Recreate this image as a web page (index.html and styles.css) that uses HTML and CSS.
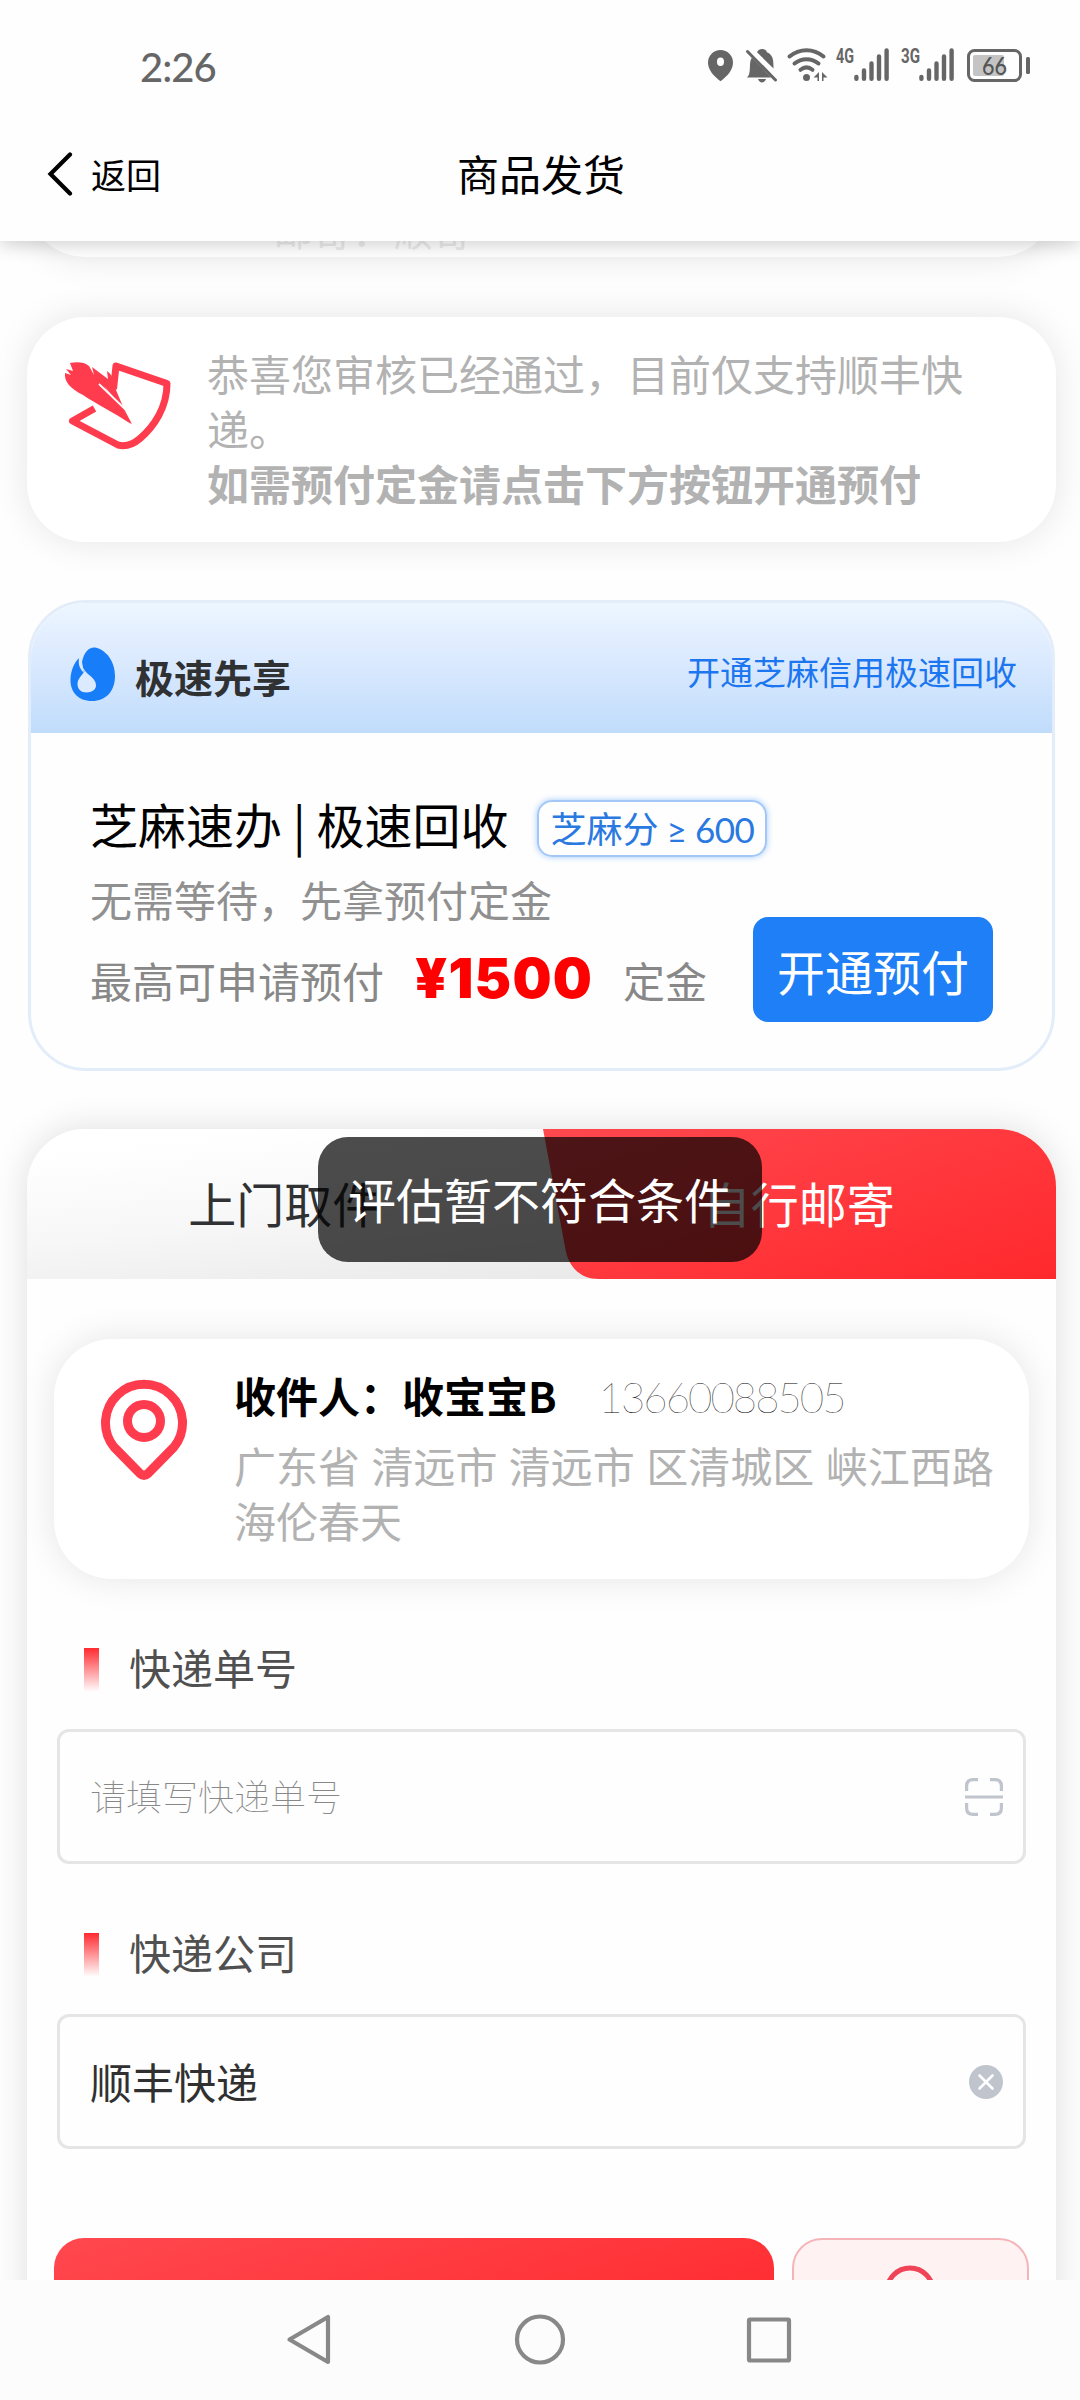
FILE: index.html
```html
<!DOCTYPE html>
<html lang="zh-CN">
<head>
<meta charset="utf-8">
<title>商品发货</title>
<link rel="stylesheet" href="styles.css">
</head>
<body>
<div class="screen">
  <header class="top">
    <div class="status">
      <span class="clock">2:26</span>
      <svg class="status-icons" width="326" height="40" viewBox="706 45 326 40" fill="#666">
        <path fill-rule="evenodd" d="M720.500 50a12.500 12.500 0 0 0-12.500 12.700c0 7 5.500 13.200 12.500 18.500 7-5.300 12.500-11.500 12.500-18.500A12.500 12.500 0 0 0 720.500 50Zm0 7.500a3.500 4.200 0 1 1 0 8.500 3.500 4.200 0 0 1 0-8.500Z"/>
        <path d="M747 77.500c2.500-2.500 2.800-5 3-13 .1-3 .8-5 2-6.700L771 77.500h-24Zm10-25.300c1-2 3-3.200 5-3.200 2.500 0 4.200 1.200 5 3.200 4 1.600 6.200 5.300 6.300 10.300l.2 6ZM758 79h8c-.8 2.300-2.200 3.400-4 3.400s-3.200-1.100-4-3.400Z"/>
        <path d="M747.500 51.500 775.500 80" fill="none" stroke="#666" stroke-width="3" stroke-linecap="round"/>
        <path d="M789.500 56.500c10-8.500 24-8.500 34 0M794.500 63.500c7-5.800 17-5.800 24 0M800.500 69.800c3.800-3 8.200-3 12 0" fill="none" stroke="#666" stroke-width="4" stroke-linecap="round"/>
        <circle cx="806.500" cy="77.500" r="3.500"/>
        <path d="M813.500 77.500 819 72v9h-1.500v-3.500ZM822 72l5.500 5.500H823.500V81H822Z"/>
        <g stroke="#666" stroke-width="4.400" stroke-linecap="round">
          <path d="M856.400 77v1.800M864 70.500v8.300M871.500 63.500v15.300M879 56.500v22.300M886.600 50.500v28.300"/>
          <path d="M921.400 77v1.800M929 70.500v8.300M936.500 63.500v15.300M944 56.500v22.300M951.600 50.500v28.300"/>
        </g>
        <text class="net" x="836" y="63" textLength="18" lengthAdjust="spacingAndGlyphs">4G</text>
        <text class="net" x="901" y="63" textLength="19" lengthAdjust="spacingAndGlyphs">3G</text>
        <rect x="968.500" y="50.500" width="52" height="30" rx="6" fill="none" stroke="#666" stroke-width="3"/>
        <rect x="973" y="55" width="31" height="21" rx="2" fill="#c4c4c4"/>
        <rect x="1026" y="57" width="4" height="17" rx="1.500"/>
        <text class="pct" x="982" y="74.500" textLength="25" lengthAdjust="spacingAndGlyphs">66</text>
      </svg>
    </div>
    <nav class="navbar">
      <a class="back">
        <svg width="26" height="44" viewBox="0 0 26 44"><path d="M23 2.500 3.500 22 23 41.500" fill="none" stroke="#000" stroke-width="4.200" stroke-linecap="round"/></svg>
        <span>返回</span>
      </a>
      <h1 class="title">商品发货</h1>
    </nav>
  </header>

  <main class="content">
    <section class="card previous"><span>邮寄：</span><span>顺寄</span></section>

    <section class="card notice">
      <svg class="notice-icon" width="110" height="90" viewBox="62 362 110 90">
        <path d="M113.500 391 116 368l51 17.500c0 24-13 43-27 55-7 6-14 8.500-22 6.500L72.500 423l22-12.500" fill="none" stroke="#ff3b4e" stroke-width="7" stroke-linejoin="round"/>
        <path d="M70 365c6-1 14-1.500 19 3l5 9-2-8 16 12-1-8c8 6 7 13 9 19l8 19-20-23 27 38c-18-12-33-19-48-29-12-6-19-13-18-22l6 2-5-6 7 2Z" fill="#ff3b4e"/>
        <path d="M90 380c12 7 24 17 34 31l8 15c-16-11-32-20-46-29Z" fill="#ff3b4e"/>
        <path d="M99 386 125 411" stroke="#fff" stroke-width="1.800"/>
      </svg>
      <div class="notice-text">恭喜您审核已经通过，目前仅支持顺丰快递。<br><b>如需预付定金请点击下方按钮开通预付</b></div>
    </section>

    <section class="credit">
      <div class="credit-head">
        <svg class="drop" width="46" height="54" viewBox="0 0 46 54">
          <path d="M12 15C14 5 19 0 25 .5 37 3 45 15 45 29c0 15-9 25-23 25S.500 45 .500 33C.500 24 4 16 9 11c-1 7 1 11 5 15Z" fill="#177df9"/>
          <path d="M10.500 10C10 18 14 23 18 27c5 4 8 7 8 11.500 0 4-4 7-9.500 7S7.500 42 7.500 37c0-5 4-8.500 7-12.500-4-4-5.500-7.500-4-14.500Z" fill="#dbeafe"/>
        </svg>
        <strong>极速先享</strong>
        <a>开通芝麻信用极速回收</a>
      </div>
      <div class="credit-body">
        <div class="credit-title"><span>芝麻速办 | 极速回收</span><em class="pill">芝麻分 <span>≥ 600</span></em></div>
        <p class="credit-sub">无需等待，先拿预付定金</p>
        <div class="credit-row">
          <p class="credit-amount"><span>最高可申请预付</span><b>¥1500</b><span>定金</span></p>
          <button class="open-btn">开通预付</button>
        </div>
      </div>
    </section>

    <section class="ship">
      <div class="tabs">
        <svg class="tab-shape" width="1029" height="150" viewBox="0 0 1029 150">
          <defs><linearGradient id="red" gradientUnits="userSpaceOnUse" x1="700" y1="-60" x2="800" y2="260"><stop offset="0" stop-color="#ff484f"/><stop offset="1" stop-color="#ff2528"/></linearGradient></defs>
          <path d="M516 0H1029V150H572C553 150 541 138 538 118Z" fill="url(#red)"/>
        </svg>
        <div class="tab">上门取件</div>
        <div class="tab active">自行邮寄</div>
      </div>
      <div class="ship-body">
        <div class="card address">
          <svg class="pin" width="88" height="104" viewBox="0 0 88 104" fill="none" stroke="#ff3b4e" stroke-width="9">
            <path d="M14 71A38.500 38.500 0 1 1 74 71L48 97.500Q44 101 40 97.500Z" stroke-linejoin="round"/>
            <circle cx="44" cy="45" r="16.500"/>
          </svg>
          <div class="address-info">
            <div class="receiver"><b>收件人：收宝宝B</b><span>13660088505</span></div>
            <p>广东省 清远市 清远市 区清城区 峡江西路海伦春天</p>
          </div>
        </div>

        <div class="label">快递单号</div>
        <div class="field">
          <span class="placeholder">请填写快递单号</span>
          <svg width="38" height="38" viewBox="0 0 38 38" fill="none" stroke="#c0c4cc" stroke-width="3.200">
            <path d="M1.600 13V8Q1.600 1.600 8 1.600H13M25 1.600H30Q36.400 1.600 36.400 8V13M36.400 25V30Q36.400 36.400 30 36.400H25M13 36.400H8Q1.600 36.400 1.600 30V25M0 19H38"/>
          </svg>
        </div>

        <div class="label">快递公司</div>
        <div class="field">
          <span>顺丰快递</span>
          <svg width="34" height="34" viewBox="0 0 34 34"><circle cx="17" cy="17" r="17" fill="#c0c4cc"/><path d="M10.500 10.500l13 13M23.500 10.500l-13 13" stroke="#fff" stroke-width="2.600" stroke-linecap="round"/></svg>
        </div>

        <div class="actions">
          <div class="submit"></div>
          <div class="service"><svg width="60" height="60" viewBox="0 0 60 60"><circle cx="30" cy="30" r="23" fill="none" stroke="#f04358" stroke-width="5"/></svg></div>
        </div>
      </div>
    </section>
  </main>

  <footer class="sysnav">
    <svg width="1080" height="120" viewBox="0 0 1080 120" fill="none" stroke="#888" stroke-width="4.200" stroke-linejoin="round">
      <path d="M328 37V82L289.500 59.500Z"/>
      <circle cx="540" cy="59.500" r="23"/>
      <rect x="749" y="39.500" width="40" height="41" rx="1"/>
    </svg>
  </footer>
  <div class="toast">评估暂不符合条件</div>
</div>
</body>
</html>
```
FILE: styles.css
```css
* { box-sizing: border-box; }
body { margin: 0; background: #fdfdfd; font-family: "Noto Sans CJK SC", sans-serif; font-size: 42px; line-height: 55px; color: #000; }
p, h1 { margin: 0; font-weight: 400; font-size: inherit; }
svg { display: block; flex: none; }

.screen { position: relative; width: 1080px; height: 2400px; overflow: hidden; display: flex; flex-direction: column; background: #fefefe; }

.top { position: relative; z-index: 2; flex: none; height: 241px; background: #fefefe; box-shadow: 0 3px 18px rgba(0, 0, 0, .2); }
.status { height: 120px; padding: 45px 48px 0 140px; display: flex; justify-content: space-between; align-items: flex-start; }
.clock { font: 500 40px/44px Lato, sans-serif; color: #666; letter-spacing: -1px; }
.net { font: 700 20px Roboto, sans-serif; }
.pct { font: 500 24px Lato, sans-serif; fill: #555; }
.navbar { height: 108px; display: grid; grid-template-columns: 1fr auto 1fr; align-items: center; padding: 0 45px 0 47px; }
.back { display: flex; align-items: center; gap: 18px; font-size: 35px; }
.back span { padding-bottom: 2px; }
.title { font-size: 42px; padding-bottom: 3px; }

.content { flex: 1; min-height: 0; overflow: hidden; padding: 0 24px 0 27px; display: flex; flex-direction: column; }
.card { background: #fff; border-radius: 58px; box-shadow: 0 0 36px rgba(0, 0, 0, .1); }

.previous { flex: none; height: 116px; margin-top: -100px; margin-bottom: 60px; padding: 61px 0 0 247px; display: flex; gap: 3px; font-size: 39px; color: #ebebeb; }

.notice { flex: none; height: 225px; padding: 28px 60px 0 35px; display: flex; gap: 35px; color: #b2b2b2; }
.notice-icon { margin-top: 15px; }
.notice-text { flex: 1; margin-right: -10px; }
.notice-text b { font-weight: 700; }

.credit { flex: none; height: 471px; margin: 58px 1px 0; border: 3px solid #e3edf9; border-radius: 58px; overflow: hidden; }
.credit-head { height: 130px; padding: 0 35px 0 39px; display: flex; align-items: center; background: linear-gradient(#edf6ff, #dfecff 35%, #c0dcfb); }
.drop { margin-top: 12px; }
.credit-head strong { margin: 17px 0 0 19px; font-size: 39px; color: #303133; }
.credit-head a { margin: 7px 0 0 auto; font-size: 33px; color: #1c76f0; }
.credit-body { padding: 58px 59px 0; }
.credit-title { display: flex; align-items: center; height: 64px; font-size: 48px; gap: 29px; }
.pill { display: block; margin-top: 11px; width: 230px; height: 57px; border: 2px solid #a3c8f8; border-radius: 15px; box-shadow: 0 0 6px rgba(23, 125, 249, .4); font-style: normal; font-size: 36px; line-height: 51px; color: #2979e0; text-align: center; white-space: nowrap; }
.pill span { font-family: Lato, sans-serif; font-size: 35px; letter-spacing: -.5px; }
.credit-sub { margin-top: 16px; color: #909090; }
.credit-row { display: flex; justify-content: space-between; align-items: flex-start; margin-top: -9px; }
.credit-amount { display: flex; align-items: baseline; margin-top: 34px; color: #888; }
.credit-amount b { margin: 0 30px 0 31px; font-family: Inter, sans-serif; font-weight: 900; font-size: 55px; letter-spacing: 1.200px; color: #f00; }
.open-btn { width: 240px; height: 105px; padding: 0; border: 0; border-radius: 15px; background: #1f7ff6; color: #fff; font: 400 48px/100px "Noto Sans CJK SC", sans-serif; }

.ship { flex: none; height: 1300px; margin-top: 58px; border-radius: 58px; background: #fefefe; box-shadow: 0 0 36px rgba(0, 0, 0, .13); }
.tabs { position: relative; display: flex; height: 150px; overflow: hidden; border-radius: 58px 58px 0 0; background: linear-gradient(174deg, #fff 10%, #f7f7f7 45%, #e2e2e2); }
.tab-shape { position: absolute; inset: 0; }
.tab { position: relative; flex: 1; text-align: center; font-size: 48px; line-height: 146px; color: #303133; }
.tab.active { color: #fff; }
.ship-body { padding: 60px 27px 0; }
.address { display: flex; gap: 46px; height: 240px; padding: 28px 20px 0 46px; }
.pin { margin-top: 9px; }
.address-info { flex: 1; }
.receiver { display: flex; align-items: baseline; gap: 42px; }
.receiver b { font-weight: 700; }
.receiver span { font-family: Lato, sans-serif; font-weight: 100; letter-spacing: -2px; color: #000; }
.address p { margin-top: 12px; word-spacing: 2px; color: #b2b2b2; }

.label { display: flex; align-items: center; gap: 30px; height: 55px; margin: 60px 0 0 30px; color: #505050; }
.label::before { content: ""; width: 15px; height: 44px; margin-top: 6px; background: linear-gradient(#ff2a30, #fff); }
.field { display: flex; align-items: center; justify-content: space-between; height: 135px; margin: 35px 3px 0; padding: 0 20px 0 30px; border: 3px solid #e5e5e5; border-radius: 12px; color: #303030; }
.field span { padding-bottom: 3px; }
.placeholder { font-size: 36px; font-weight: 100; color: #888; }

.actions { display: flex; gap: 18px; margin-top: 89px; }
.submit { width: 722px; height: 132px; border-radius: 30px; background: linear-gradient(165deg, #ff484f, #ff2528); }
.service { width: 238px; height: 132px; display: flex; justify-content: center; padding-top: 21px; border: 2px solid #f5b5b8; border-radius: 30px; background: #fef3f2; }

.sysnav { position: relative; z-index: 2; flex: none; height: 120px; background: #fcfcfc; }
.toast { position: absolute; z-index: 3; left: 318px; top: 1137px; width: 444px; height: 125px; border-radius: 30px; background: rgba(0, 0, 0, .7); color: #fff; font-size: 48px; line-height: 123px; text-align: center; }
```
